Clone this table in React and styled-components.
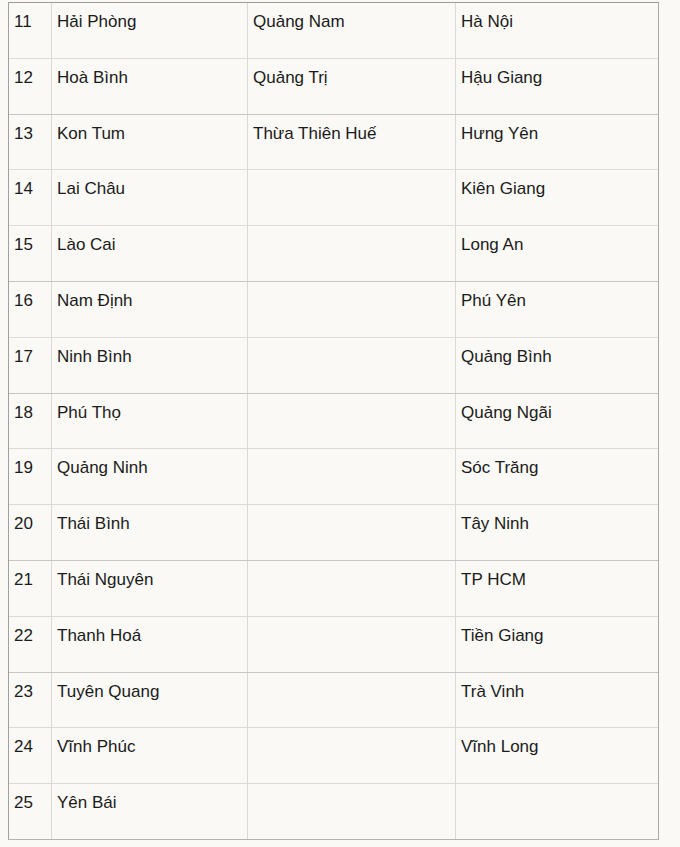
import React from "react";
import styled, { createGlobalStyle } from "styled-components";

const Global = createGlobalStyle`
  html, body {
    margin: 0;
    padding: 0;
    background: #faf9f5;
  }
  body {
    font-family: "Liberation Sans", Arial, sans-serif;
    color: #1b1b1b;
  }
`;

const Page = styled.div`
  padding: 2px 0 0 8px;
  min-height: 845px;
`;

const Table = styled.div`
  display: flex;
  flex-direction: column;
  width: 651px;
  box-sizing: border-box;
  border-top: 1px solid #9c9c9c;
  border-left: 1px solid #a0a0a0;
  border-right: 1px solid #a8a8a8;
  border-bottom: 1px solid #b4b4b4;
  background: #faf9f5;
`;

const Row = styled.div`
  display: grid;
  grid-template-columns: 43px 196px 208px 202px;
  box-sizing: border-box;
  height: ${(p) => (p.$last ? "54.8px" : "55.8px")};
  border-bottom: ${(p) =>
    p.$last ? "none" : `1px solid ${p.$strong ? "#c6c6c6" : "#dadada"}`};
`;

const Cell = styled.div`
  box-sizing: border-box;
  padding: 9px 5px 0 5px;
  font-size: 17px;
  line-height: 20px;
  white-space: nowrap;
  border-right: ${(p) => (p.$end ? "none" : "1px solid #d9d9d9")};
`;

const rows = [
  ["11", "Hải Phòng", "Quảng Nam", "Hà Nội"],
  ["12", "Hoà Bình", "Quảng Trị", "Hậu Giang"],
  ["13", "Kon Tum", "Thừa Thiên Huế", "Hưng Yên"],
  ["14", "Lai Châu", "", "Kiên Giang"],
  ["15", "Lào Cai", "", "Long An"],
  ["16", "Nam Định", "", "Phú Yên"],
  ["17", "Ninh Bình", "", "Quảng Bình"],
  ["18", "Phú Thọ", "", "Quảng Ngãi"],
  ["19", "Quảng Ninh", "", "Sóc Trăng"],
  ["20", "Thái Bình", "", "Tây Ninh"],
  ["21", "Thái Nguyên", "", "TP HCM"],
  ["22", "Thanh Hoá", "", "Tiền Giang"],
  ["23", "Tuyên Quang", "", "Trà Vinh"],
  ["24", "Vĩnh Phúc", "", "Vĩnh Long"],
  ["25", "Yên Bái", "", ""],
];

const strongRows = new Set(["12", "15", "17", "20", "22"]);

export default function App() {
  return (
    <>
      <Global />
      <Page>
        <Table role="table">
          {rows.map((r, i) => (
            <Row
              key={r[0]}
              role="row"
              $last={i === rows.length - 1}
              $strong={strongRows.has(r[0])}
            >
              {r.map((c, j) => (
                <Cell key={j} role="cell" $end={j === r.length - 1}>
                  {c}
                </Cell>
              ))}
            </Row>
          ))}
        </Table>
      </Page>
    </>
  );
}
